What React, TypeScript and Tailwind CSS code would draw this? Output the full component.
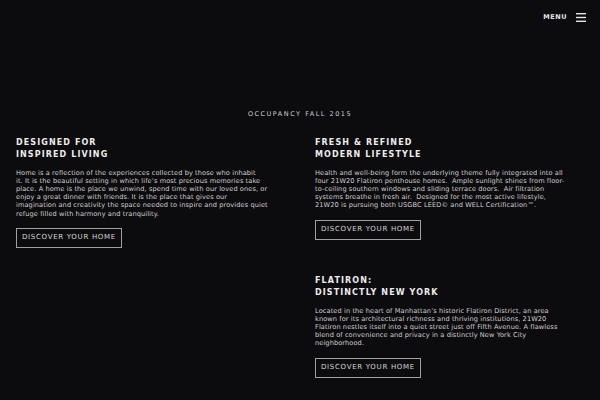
import React from "react";

type Section = {
  title: string[];
  lines: string[];
};

const left: Section[] = [
  {
    title: ["DESIGNED FOR", "INSPIRED LIVING"],
    lines: [
      "Home is a reflection of the experiences collected by those who inhabit",
      "it. It is the beautiful setting in which life\u2019s most precious memories take",
      "place. A home is the place we unwind, spend time with our loved ones, or",
      "enjoy a great dinner with friends. It is the place that gives our",
      "imagination and creativity the space needed to inspire and provides quiet",
      "refuge filled with harmony and tranquility.",
    ],
  },
];

const right: Section[] = [
  {
    title: ["FRESH & REFINED", "MODERN LIFESTYLE"],
    lines: [
      "Health and well-being form the underlying theme fully integrated into all",
      "four 21W20 Flatiron penthouse homes.  Ample sunlight shines from floor-",
      "to-ceiling southern windows and sliding terrace doors.  Air filtration",
      "systems breathe in fresh air.  Designed for the most active lifestyle,",
      "21W20 is pursuing both USGBC LEED\u00a9 and WELL Certification\u2122.",
    ],
  },
  {
    title: ["FLATIRON:", "DISTINCTLY NEW YORK"],
    lines: [
      "Located in the heart of Manhattan\u2019s historic Flatiron District, an area",
      "known for its architectural richness and thriving institutions, 21W20",
      "Flatiron nestles itself into a quiet street just off Fifth Avenue. A flawless",
      "blend of convenience and privacy in a distinctly New York City",
      "neighborhood.",
    ],
  },
];

function Block({ s }: { s: Section }) {
  return (
    <div className="flex flex-col items-start">
      <h2 className="text-[8px] font-bold leading-[12px] tracking-[1.1px] text-[#ececec]">
        {s.title.map((t) => (
          <span key={t} className="block">
            {t}
          </span>
        ))}
      </h2>
      <p className="mt-[8px] text-[6.6px] leading-[8.2px] tracking-[0.1px] text-[#d0d0d0]">
        {s.lines.map((l) => (
          <span key={l} className="block whitespace-pre">
            {l}
          </span>
        ))}
      </p>
      <button className="mt-[10px] h-[20px] border border-[#a0a0a0] px-[5px] text-[7px] leading-none tracking-[0.7px] text-[#d6d6d6]">
        DISCOVER YOUR HOME
      </button>
    </div>
  );
}

export default function App() {
  return (
    <main
      className="min-h-[400px] bg-[#0c0b0d]"
      style={{ fontFamily: '"DejaVu Sans", sans-serif' }}
    >
      {/* Top bar */}
      <header className="flex items-center justify-end gap-[9px] pr-[14px] pt-[13px]">
        <span className="text-[6.5px] font-bold tracking-[0.5px] text-[#e6e6e6]">MENU</span>
        <svg width="10" height="9" viewBox="0 0 10 9" fill="none">
          <rect x="0" y="0" width="10" height="1.4" fill="#e6e6e6" />
          <rect x="0" y="3.8" width="10" height="1.4" fill="#e6e6e6" />
          <rect x="0" y="7.6" width="10" height="1.4" fill="#e6e6e6" />
        </svg>
      </header>

      <p className="mt-[87px] text-center text-[6.5px] tracking-[1.5px] text-[#cfcfcf]">
        OCCUPANCY FALL 2015
      </p>

      <div className="mt-[17px] grid grid-cols-2 gap-[30px] px-4">
        <div className="flex flex-col gap-[35px]">
          {left.map((s) => (
            <Block key={s.title[0]} s={s} />
          ))}
        </div>
        <div className="flex flex-col gap-[35px]">
          {right.map((s) => (
            <Block key={s.title[0]} s={s} />
          ))}
        </div>
      </div>
    </main>
  );
}
